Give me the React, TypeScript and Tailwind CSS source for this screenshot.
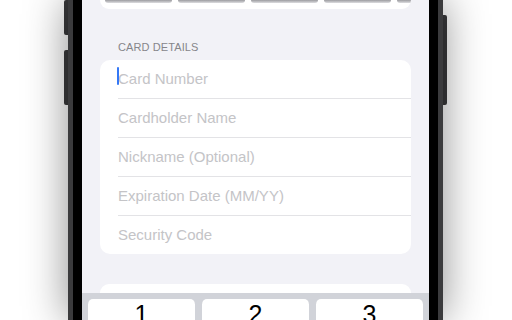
import React from "react";

const rows = [
  "Card Number",
  "Cardholder Name",
  "Nickname (Optional)",
  "Expiration Date (MM/YY)",
  "Security Code",
];

export default function App() {
  return (
    <div
      className="w-[512px] h-[320px] overflow-hidden bg-white flex pl-[68px]"
      style={{ fontFamily: '"Liberation Sans", Arial, sans-serif' }}
    >
      <div className="relative w-[375px] h-[320px] shrink-0">
        {/* side buttons */}
        <div className="absolute left-[-4px] top-0 w-[5px] h-[35px] bg-[#3a3a3c] rounded-l-[2px]" />
        <div className="absolute left-[-4px] top-[50px] w-[5px] h-[55px] bg-[#3a3a3c] rounded-l-[2px]" />
        <div className="absolute right-[-4px] top-[15px] w-[5px] h-[90px] bg-[#3a3a3c] rounded-r-[2px]" />
        <div className="relative h-full bg-[#3b3b3d] px-[5px] shadow-[0_0_40px_rgba(0,0,0,0.45)]">
          <div className="h-full bg-black px-[9px]">
            <div className="h-full bg-[#f2f2f7] flex flex-col overflow-hidden">
              {/* top card remnant */}
              <div className="shrink-0 mx-[18px] h-[9px] bg-white rounded-b-[10px] overflow-hidden flex gap-[6px] pl-[5px]">
                {[0, 1, 2, 3, 4].map((i) => (
                  <div
                    key={i}
                    className="w-[67px] h-[3px] shrink-0 rounded-b-[3px] bg-gradient-to-b from-[#9c9ca0] to-[#dedee1]"
                  />
                ))}
              </div>

              {/* label */}
              <div className="shrink-0 mt-[32px] ml-[36px] text-[11px] leading-[13px] text-[#86868b] tracking-[0.1px]">
                CARD DETAILS
              </div>

              {/* form card */}
              <div className="shrink-0 mt-[6px] mx-[18px] bg-white rounded-[10px] pl-[18px]">
                {rows.map((r, i) => (
                  <div
                    key={r}
                    className={
                      i < rows.length - 1
                        ? "h-[39px] border-b border-[#e3e3e6] flex items-center text-[15px] text-[#c4c4c7]"
                        : "h-[38px] flex items-center text-[15px] text-[#c4c4c7]"
                    }
                  >
                    <span className="relative">
                      {i === 0 && (
                        <span className="absolute left-[-1px] top-[-1px] w-[2px] h-[18px] bg-[#3478f6] rounded-[1px]" />
                      )}
                      {r}
                    </span>
                  </div>
                ))}
              </div>

              {/* next card peeking */}
              <div className="shrink-0 mt-[30px] mx-[18px] h-[9px] bg-white rounded-t-[10px]" />

              {/* keyboard */}
              <div className="shrink-0 h-[60px] bg-[#d1d3d9] px-[6px] pt-[6px] flex gap-[7px]">
                {["1", "2", "3"].map((d) => (
                  <div
                    key={d}
                    className="flex-1 h-[46px] bg-white rounded-[5px] shadow-[0_1px_0_#898a8d] flex justify-center text-[25px] leading-[28px] pt-[1px] text-black"
                  >
                    {d}
                  </div>
                ))}
              </div>
            </div>
          </div>
        </div>
      </div>
    </div>
  );
}
